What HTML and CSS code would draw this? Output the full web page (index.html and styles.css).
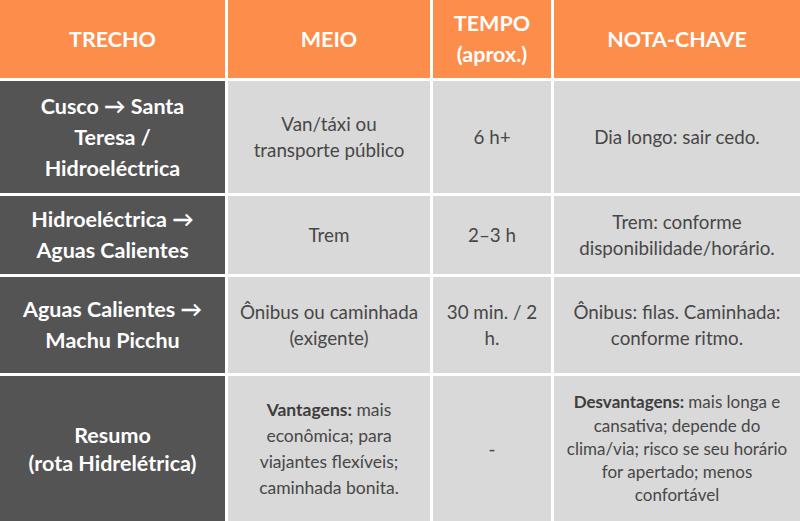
FILE: index.html
```html
<!DOCTYPE html>
<html lang="pt">
<head>
<meta charset="utf-8">
<link rel="stylesheet" href="styles.css">
</head>
<body>
<div class="table">
  <div class="cell head">TRECHO</div>
  <div class="cell head">MEIO</div>
  <div class="cell head">TEMPO<br>(aprox.)</div>
  <div class="cell head">NOTA-CHAVE</div>

  <div class="cell lead">Cusco → Santa<br>Teresa /<br>Hidroeléctrica</div>
  <div class="cell body">Van/táxi ou<br>transporte público</div>
  <div class="cell body">6 h+</div>
  <div class="cell body">Dia longo: sair cedo.</div>

  <div class="cell lead">Hidroeléctrica →<br>Aguas Calientes</div>
  <div class="cell body">Trem</div>
  <div class="cell body">2–3 h</div>
  <div class="cell body">Trem: conforme<br>disponibilidade/horário.</div>

  <div class="cell lead">Aguas Calientes →<br>Machu Picchu</div>
  <div class="cell body">Ônibus ou caminhada<br>(exigente)</div>
  <div class="cell body">30 min. / 2<br>h.</div>
  <div class="cell body">Ônibus: filas. Caminhada:<br>conforme ritmo.</div>

  <div class="cell lead lead-small">Resumo<br>(rota Hidrelétrica)</div>
  <div class="cell body small">
    <span><b>Vantagens:</b> mais<br>econômica; para<br>viajantes flexíveis;<br>caminhada bonita.</span>
  </div>
  <div class="cell body">-</div>
  <div class="cell body smaller">
    <span><b>Desvantagens:</b> mais longa e<br>cansativa; depende do<br>clima/via; risco se seu horário<br>for apertado; menos<br>confortável</span>
  </div>
</div>
</body>
</html>
```

FILE: styles.css
```css
html, body {
  margin: 0;
  padding: 0;
  background: #ffffff;
}

.table {
  width: 800px;
  height: 521px;
  display: grid;
  grid-template-columns: 225px 202px 118px 1fr;
  grid-template-rows: 78px 112px 78px 96px 1fr;
  gap: 3px;
  background: #ffffff;
  font-family: Lato, "Open Sans", sans-serif;
}

.cell {
  display: flex;
  align-items: center;
  justify-content: center;
  text-align: center;
  box-sizing: border-box;
  padding: 0 4px;
  white-space: nowrap;
}

.head {
  background: #fd8d4b;
  color: #ffffff;
  font-weight: 700;
  font-size: 21.5px;
  line-height: 31px;
}

.lead {
  background: #545454;
  color: #ffffff;
  font-weight: 700;
  font-size: 21.5px;
  line-height: 31px;
}

.lead-small {
  line-height: 28px;
}

.body {
  background: #d9d9d9;
  color: #474747;
  font-size: 18.8px;
  line-height: 26px;
}

.small {
  font-size: 17.5px;
  line-height: 26px;
}

.smaller {
  font-size: 17px;
  line-height: 23.3px;
}

.small b, .smaller b {
  font-weight: 700;
  color: #3d3d3d;
}
```
